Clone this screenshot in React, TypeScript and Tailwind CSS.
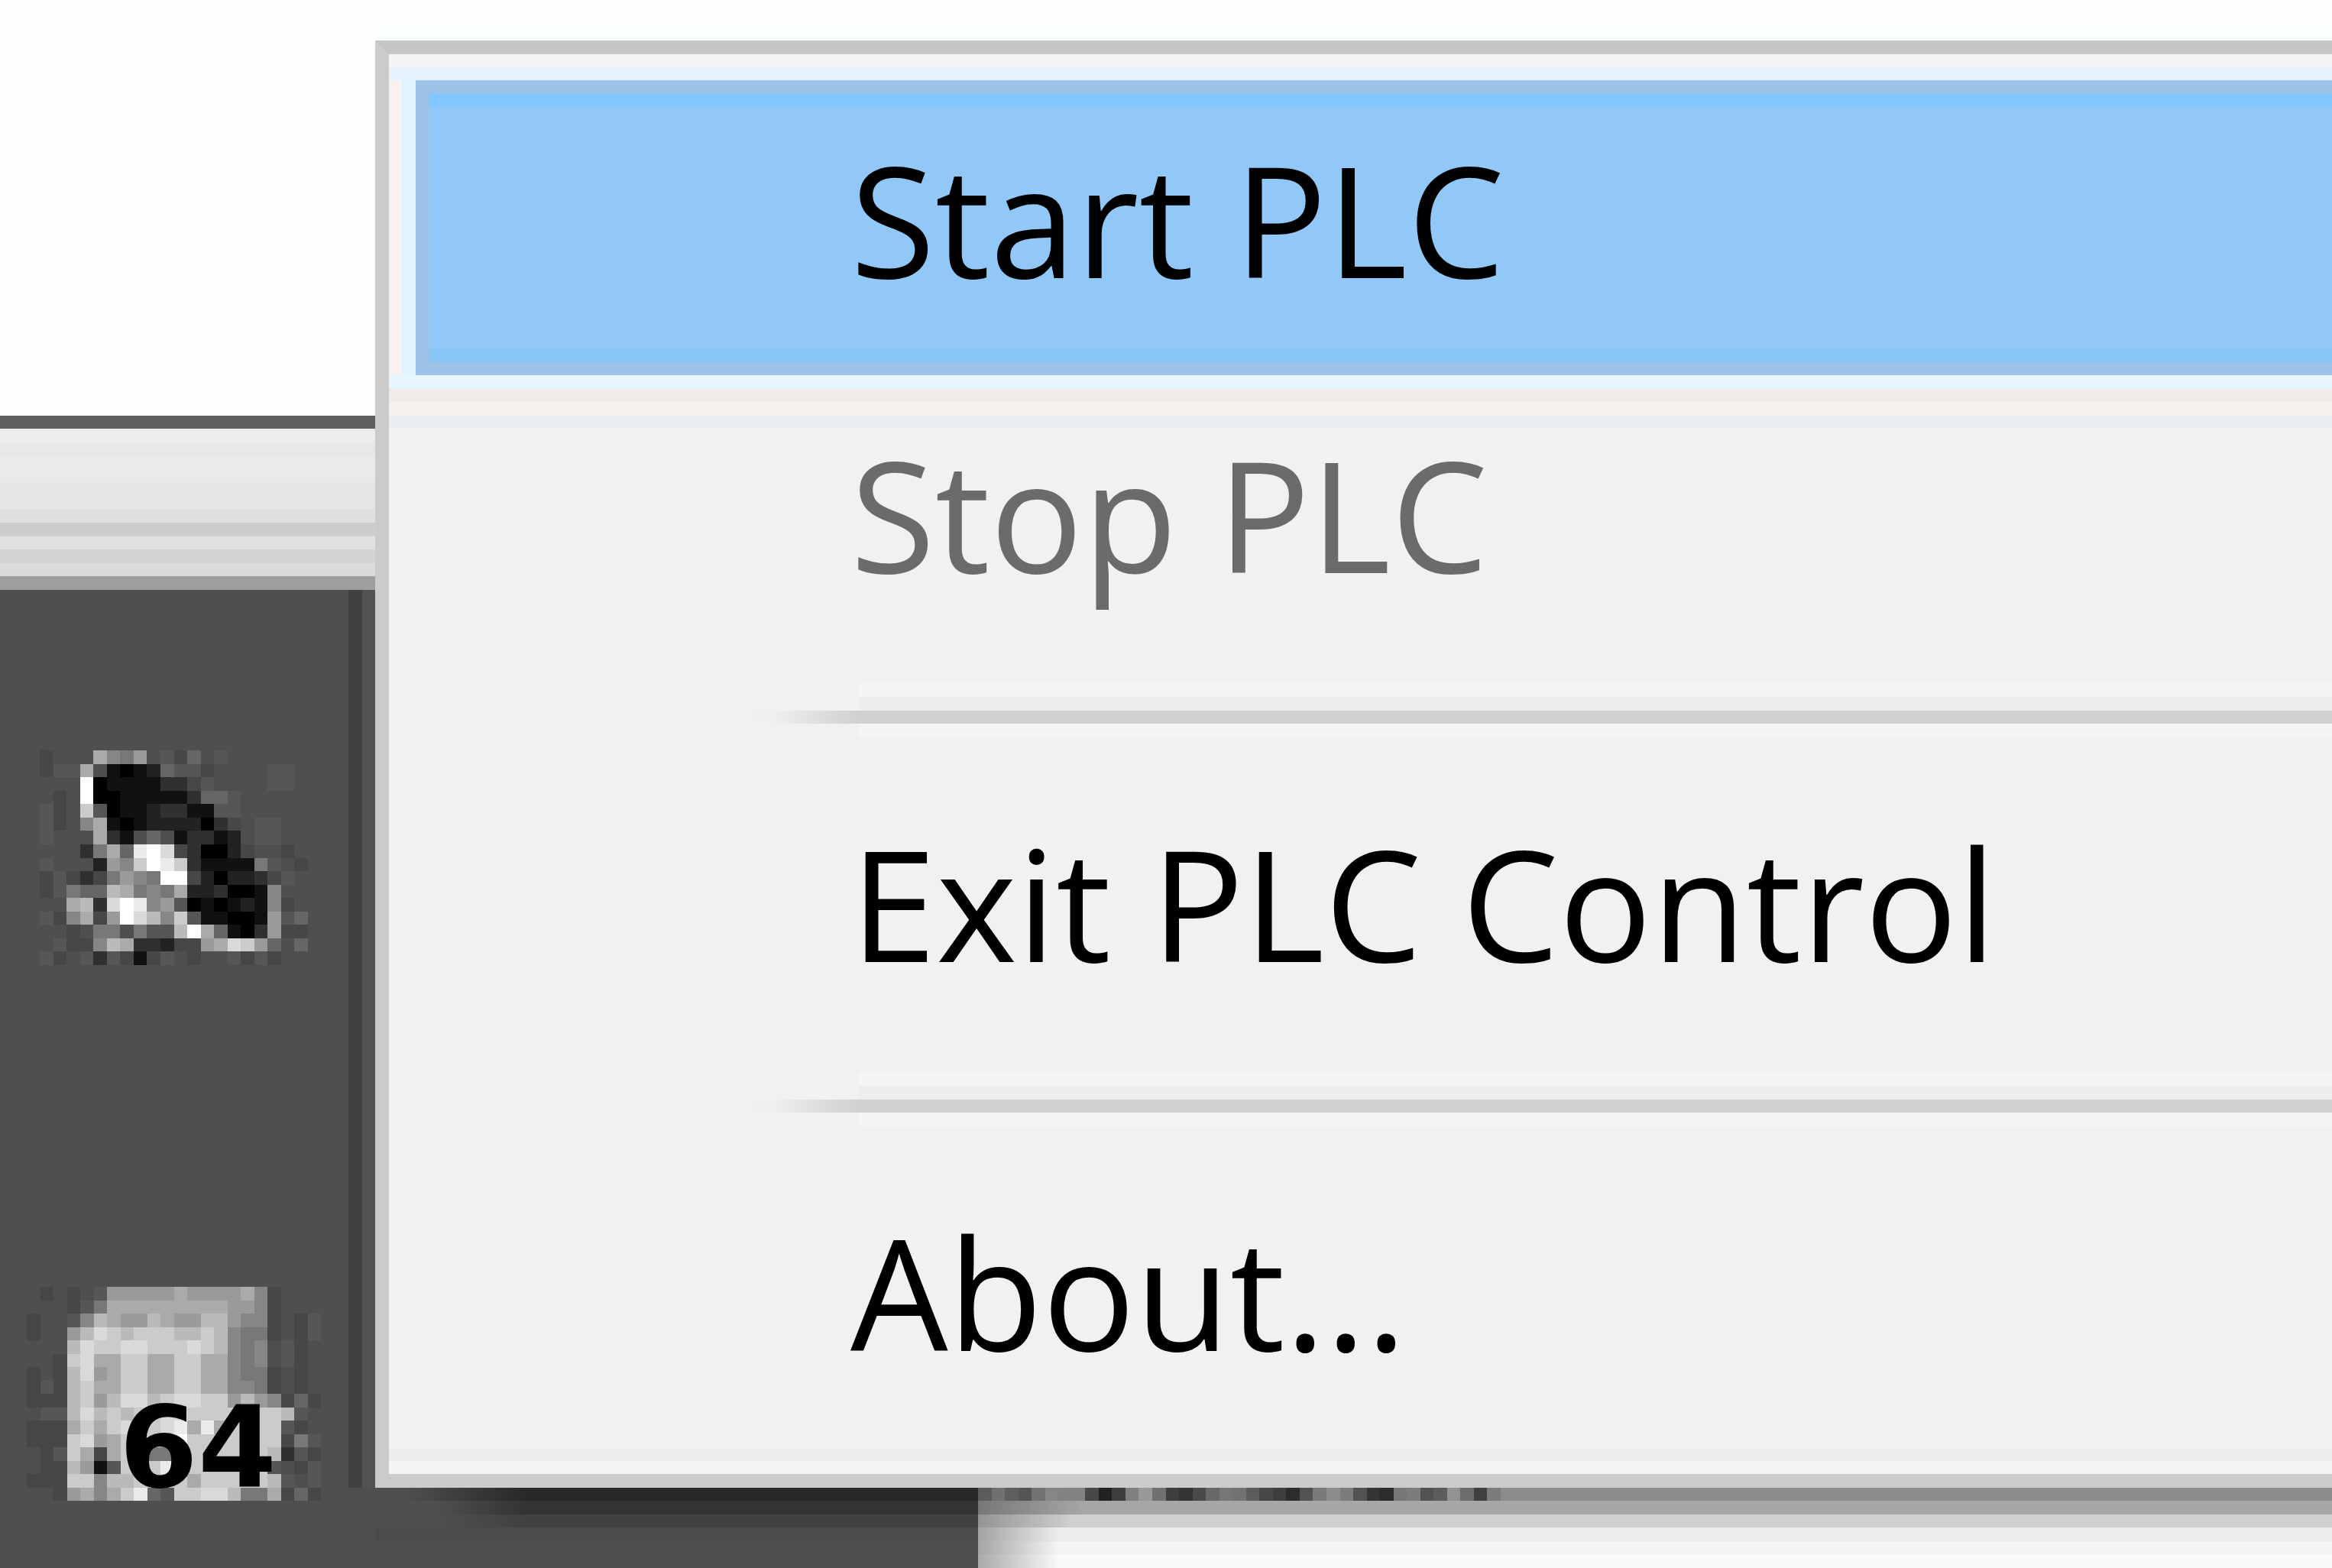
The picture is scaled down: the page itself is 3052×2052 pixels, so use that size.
import React from "react";

const SHADES: Record<string, string> = {
  "0": "#000000", "1": "#111111", "2": "#222222", "3": "#303030",
  "4": "#474747", "5": "#565656", "6": "#666666", "7": "#787878",
  "8": "#868686", "9": "#9a9a9a", a: "#aaaaaa", b: "#bababa",
  c: "#cbcbcb", d: "#d9d9d9", e: "#ebebeb", f: "#ffffff",
};

const DISH = [
  "4...a879.546.5......",
  "455a.10126554....55.",
  "...f011113345....55.",
  ".4.f00111113665.....",
  "54.c50112331155.....",
  "54.8a1012222034.55..",
  "5...a31.6.13312.55..",
  "...37a6efd430024..4.",
  "5...298cfec3111175.4",
  "45434798 7ff42022345".replace(" ", ""),
  "45766ba787a2230018..",
  "..ab3dfe89501012184.",
  "548a49fdb8c511001956",
  "..4.77.755bfa6103944",
  ".5448ba332449adc96.6",
  "54.5354145.4..5454..",
];

const CUBE = [
  ".4.4.599999a9999a84...",
  "...457aaaaaaaaa9984...",
  "4..58ba99ba99bb9884.45",
  "4..9bdcbcccbbcb8774.45",
  "...bdccddcccdcb878.54.",
  "..4cdaaccaaccaa878.54.",
  "4.4bd9accaaccaa8774.4.",
  "454bcaaccaaccaa8874.4.",
  "444bc9bddbcddcc9b98464",
  ".55bdbcbccddcccccccb5.",
  "444acacddcdeaeacccc54.",
  "444cd9acccafccccccc475",
  ".45ca4acc77cccccccb354",
  ".44b915ccceccccccc5.45",
  "444cc8bbccccacccccb5.5",
  "..49a8ace65ccddb77a464",
];

function ShadeGrid({ rows }: { rows: string[] }) {
  return (
    <g shapeRendering="crispEdges">
      {rows.flatMap((row, y) =>
        row.split("").map((c, x) =>
          c === "." ? null : (
            <rect key={`${x}-${y}`} x={x} y={y} width="1" height="1" fill={SHADES[c]} />
          ),
        ),
      )}
    </g>
  );
}

/* Tops of letters that peek out under the menu's lower border. */
const LETTER_TOPS = [
  "#5c5c5c", "#707070", "#5e5e5e", "#555555", "#727272", "#868686", "#828282", "#828282",
  "#484848", "#222222", "#3e3e3e", "#808080", "#989898", "#707070", "#3e3e3e", "#333333",
  "#4a4a4a", "#686868", "#767676", "#727272", "#5c5c5c", "#484848", "#3e3e3e", "#2c2c2c",
  "#525252", "#7a7a7a", "#8c8c8c", "#7c7c7c", "#525252", "#353535", "#2c2c2c", "#767676",
  "#7c7c7c", "#525252", "#5c5c5c", "#929292", "#6c6c6c", "#404040", "#7c7c7c",
];

function Separator() {
  return (
    <div role="separator" className="flex h-[123px] flex-col">
      <div className="h-[17px]" />
      <div className="ml-[614px] h-[18px] bg-[#f5f5f5]" />
      <div className="ml-[614px] h-[18px] bg-[#eeeeee]" />
      <div className="ml-[473px] flex h-[17px]">
        <div className="w-[141px] bg-linear-to-r from-[#f0f0f0] from-20% to-[#d0d0d0]" />
        <div className="flex-1 bg-[#d0d0d0]" />
      </div>
      <div className="ml-[614px] h-[18px] bg-[#f5f5f5]" />
    </div>
  );
}

function Item({ label, disabled = false }: { label: string; disabled?: boolean }) {
  return (
    <button
      type="button"
      role="menuitem"
      disabled={disabled}
      className="relative block h-[386px] w-full pb-6 pl-[604px] text-left text-[202px] leading-none whitespace-nowrap text-black disabled:text-[#6d6a6d]"
    >
      {label}
    </button>
  );
}

export default function App() {
  return (
    <div className="flex min-h-screen overflow-hidden bg-[#4f4f4f] font-['Open_Sans','Noto_Sans',sans-serif]">
      <aside className="flex w-[491px] shrink-0 flex-col">
        <div className="h-[544px] bg-[#fefefe]" />
        <div className="h-[17px] bg-[#606060]" />
        <div className="h-[18px] bg-[#ececec]" />
        <div className="h-[17px] bg-[#e8e8e8]" />
        <div className="h-[35px] bg-[#eaeaea]" />
        <div className="h-[35px] bg-[#e5e5e5]" />
        <div className="h-[18px] bg-[#dfdfdf]" />
        <div className="h-[18px] bg-[#cdcdcd]" />
        <div className="h-[17px] bg-[#e1e1e1]" />
        <div className="h-[18px] bg-[#d4d4d4]" />
        <div className="h-[17px] bg-[#dbdbdb]" />
        <div className="h-[18px] bg-[#9e9e9e]" />
        <div className="flex flex-1 bg-[#4f4f4f]">
          <div className="flex flex-1 flex-col">
            <svg viewBox="0 0 20 16" className="mt-[210px] ml-[52px] h-[281px] w-[351px]" preserveAspectRatio="none" role="img" aria-label="Satellite dish">
              <ShadeGrid rows={DISH} />
            </svg>
            <svg viewBox="0 0 385 281" className="mt-[421px] ml-[35px] h-[281px] w-[385px] overflow-visible" role="img" aria-label="64-bit device">
              <g transform="scale(17.5 17.5)">
                <ShadeGrid rows={CUBE} />
              </g>
              <text x="121" y="262" fontFamily="DejaVu Sans" fontWeight="700" fontSize="148" fill="#000000">64</text>
            </svg>
          </div>
          <div className="mb-[105px] w-[18px] bg-[#414141]" />
          <div className="mb-[105px] w-[17px] bg-[#525252]" />
        </div>
      </aside>

      <main className="flex min-w-0 flex-1 flex-col">
        <div className="h-[35px] bg-[#fefefe]" />
        <div className="h-[18px] bg-[#fafffe]" />
        <nav
          role="menu"
          aria-label="PLC Control"
          className="border-y-[18px] border-l-[18px] border-[#cbcbcb] border-t-[#c5c5c5] border-r-0 bg-[#f1f1f1]"
        >
          <div className="h-[17px] bg-[#f5f4f3]" />
          <div className="h-[17px] bg-[#e6f3fd]" />
          <div className="flex h-[386px]">
            <div className="w-[17px] bg-[#f7f2ef]" />
            <div className="w-[18px] bg-[#e0f3fe]" />
            <button
              type="button"
              role="menuitem"
              className="flex h-full flex-1 flex-col border-y-[17px] border-l-[17px] border-[#9dc4e6] bg-[#91c8f7] text-left text-[202px] leading-none whitespace-nowrap text-black"
            >
              <span className="h-[18px] w-full shrink-0 bg-[#83c7ff]" />
              <span className="flex w-full flex-1 items-center pb-6 pl-[552px]">Start PLC</span>
              <span className="h-[18px] w-full shrink-0 bg-[#88c5f4]" />
            </button>
          </div>
          <div className="-mb-[70px] h-[70px]">
            <div className="h-[18px] bg-[#e6f5ff]" />
            <div className="h-[17px] bg-[#f0ebe8]" />
            <div className="h-[18px] bg-[#f6f1ee]" />
            <div className="h-[17px] bg-[#ebeff2]" />
          </div>
          <Item label="Stop PLC" disabled />
          <Separator />
          <Item label="Exit PLC Control" />
          <Separator />
          <Item label="About..." />
          <div className="h-[17px] bg-[#eeeeee]" />
          <div className="h-[17px] bg-[#f4f4f4]" />
        </nav>
        <div className="flex flex-1">
          <div className="flex w-[789px] flex-col bg-[#4f4f4f]">
            <div className="h-[17px] bg-linear-to-r from-[#4f4f4f] from-5% to-[#292929] to-25%" />
            <div className="h-[18px] bg-linear-to-r from-[#4f4f4f] from-10% to-[#333333] to-25%" />
            <div className="h-[17px] bg-linear-to-r from-[#4f4f4f] from-10% to-[#414141] to-25%" />
            <div className="h-[18px] bg-[#4b4b4b]" />
          </div>
          <div className="flex flex-1 flex-col">
            <div className="flex h-[17px] bg-[#8b8b8b]">
              <svg viewBox="0 0 39 1" preserveAspectRatio="none" className="h-full w-[684px]" shapeRendering="crispEdges" aria-hidden="true">
                {LETTER_TOPS.map((fill, i) => (
                  <rect key={i} x={i} y="0" width="1" height="1" fill={fill} />
                ))}
              </svg>
            </div>
            <div className="h-[18px] bg-linear-to-r from-[#787878] to-[#a7a7a7] to-8%" />
            <div className="h-[17px] bg-linear-to-r from-[#949494] to-[#d0d0d0] to-7%" />
            <div className="h-[18px] bg-linear-to-r from-[#a3a3a3] to-[#ededed] to-6%" />
            <div className="h-[17px] bg-linear-to-r from-[#a5a5a5] to-[#f5f5f5] to-6%" />
            <div className="flex-1 bg-linear-to-r from-[#aaaaaa] to-[#fafafa] to-6%" />
          </div>
        </div>
      </main>
    </div>
  );
}
